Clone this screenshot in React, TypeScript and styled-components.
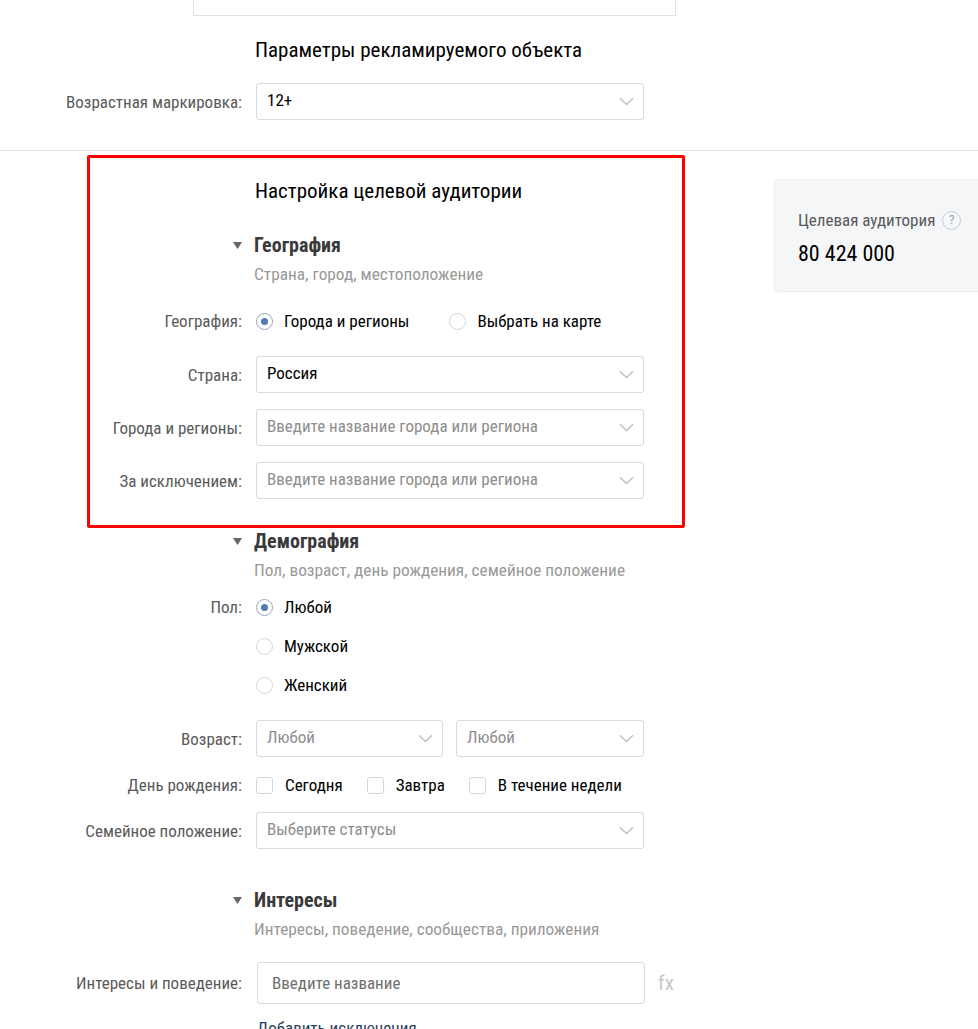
import React from "react";
import styled, { createGlobalStyle } from "styled-components";

const Global = createGlobalStyle`
  html, body { margin: 0; padding: 0; background: #fff; }
  body {
    font-family: "Liberation Sans Narrow", "Arial Narrow", "Roboto Condensed", Roboto, sans-serif;
    overflow-x: hidden;
    color: #000;
  }
  * { box-sizing: border-box; }
`;

const Page = styled.div`
  width: 978px;
  overflow: hidden;
`;

const TopBox = styled.div`
  margin-left: 193px;
  width: 483px;
  height: 16px;
  border: 1px solid #dfe2e7;
  border-top: none;
`;

const TopSection = styled.section`
  padding-bottom: 30px;
  border-bottom: 1px solid #e1e4e8;
`;

const Heading = styled.h2<{ $mt: number }>`
  margin: ${(p) => p.$mt}px 0 0 255px;
  font-size: 21px;
  line-height: 24px;
  font-weight: 400;
  color: #000;
`;

const Row = styled.div<{ $mt: number; $align?: string }>`
  display: grid;
  grid-template-columns: 242px 388px;
  column-gap: 14px;
  align-items: ${(p) => p.$align || "center"};
  margin-top: ${(p) => p.$mt}px;
`;

const Label = styled.div`
  text-align: right;
  color: #5a5a5a;
  font-size: 17px;
  line-height: 20px;
`;

const SelectBox = styled.div`
  height: 37px;
  border: 1px solid #d5dbe1;
  border-radius: 3px;
  display: flex;
  align-items: center;
  justify-content: space-between;
  padding: 0 9px 0 10px;
  background: #fff;
`;

const SelectText = styled.span<{ $placeholder?: boolean }>`
  font-size: 17px;
  color: ${(p) => (p.$placeholder ? "#8e8e8e" : "#000")};
  margin-top: -4px;
`;

const Chevron = () => (
  <svg width="15" height="9" viewBox="0 0 15 9" fill="none">
    <path d="M1 1.2 L7.5 7.5 L14 1.2" stroke="#b9c1ca" strokeWidth="1.4" />
  </svg>
);

const Select = ({ text, placeholder }: { text: string; placeholder?: boolean }) => (
  <SelectBox>
    <SelectText $placeholder={placeholder}>{text}</SelectText>
    <Chevron />
  </SelectBox>
);

const Main = styled.div`
  position: relative;
  display: flex;
`;

const FormCol = styled.div`
  width: 775px;
  flex: none;
`;

const Aside = styled.aside`
  flex: none;
  width: 230px;
  margin-top: 29px;
`;

const Panel = styled.div`
  background: #f5f6f8;
  border-radius: 4px;
  box-shadow: 0 0 0 1px #eceef1, 0 1px 2px rgba(0, 0, 0, 0.06);
  padding: 30px 23px 24px;
`;

const PanelTitle = styled.div`
  display: flex;
  align-items: center;
  gap: 7px;
  color: #5a5a5a;
  font-size: 17px;
  line-height: 20px;
`;

const Help = styled.span`
  width: 19px;
  height: 19px;
  border: 1px solid #c9ced6;
  border-radius: 50%;
  color: #9aa3ad;
  font-size: 13px;
  display: inline-flex;
  align-items: center;
  justify-content: center;
`;

const Audience = styled.div`
  margin-top: 11px;
  font-size: 22px;
  line-height: 26px;
  color: #000;
`;

const Highlight = styled.div`
  position: absolute;
  left: 87px;
  top: 4px;
  width: 598px;
  height: 373px;
  border: 3px solid #ff0000;
  border-radius: 2px;
  pointer-events: none;
`;

const HeadRow = styled.div<{ $mt: number }>`
  display: grid;
  grid-template-columns: 242px 388px;
  column-gap: 12px;
  align-items: center;
  margin-top: ${(p) => p.$mt}px;
`;

const Tri = styled.span`
  display: flex;
  justify-content: flex-end;
`;

const HeadTitle = styled.div`
  font-size: 20px;
  line-height: 22px;
  font-weight: 700;
  color: #3a3a3a;
`;

const Sub = styled.div<{ $mt: number }>`
  margin: ${(p) => p.$mt}px 0 0 254px;
  font-size: 17.3px;
  line-height: 20px;
  color: #999;
`;

const SectionHead = ({ title, sub, mt }: { title: string; sub: string; mt: number }) => (
  <>
    <HeadRow $mt={mt}>
      <Tri>
        <svg width="9" height="7" viewBox="0 0 9 7">
          <polygon points="0,0 9,0 4.5,7" fill="#666" />
        </svg>
      </Tri>
      <HeadTitle>{title}</HeadTitle>
    </HeadRow>
    <Sub $mt={8}>{sub}</Sub>
  </>
);

const Options = styled.div<{ $column?: boolean; $gap: number }>`
  display: flex;
  flex-direction: ${(p) => (p.$column ? "column" : "row")};
  gap: ${(p) => p.$gap}px;
`;

const Option = styled.label`
  display: flex;
  align-items: center;
  gap: 11px;
  height: 20px;
  font-size: 17px;
  color: #000;
`;

const RadioCircle = styled.span<{ $on?: boolean }>`
  width: 17px;
  height: 17px;
  border-radius: 50%;
  border: 1px solid ${(p) => (p.$on ? "#8fa7c4" : "#cfd7e0")};
  display: inline-flex;
  align-items: center;
  justify-content: center;
  flex: none;
  &::after {
    content: "";
    width: 7px;
    height: 7px;
    border-radius: 50%;
    background: ${(p) => (p.$on ? "#4f7ab5" : "transparent")};
  }
`;

const Box = styled.span`
  width: 17px;
  height: 17px;
  border-radius: 3px;
  border: 1px solid #cfd7e0;
  flex: none;
`;

const CheckOption = styled(Option)`
  gap: 12px;
`;

const Pair = styled.div`
  display: grid;
  grid-template-columns: 187px 188px;
  column-gap: 13px;
`;

const FieldAddon = styled.div`
  display: flex;
  align-items: center;
  gap: 13px;
  margin-left: 1px;
`;

const TextInput = styled.div`
  width: 388px;
  height: 42px;
  border: 1px solid #d5dbe1;
  border-radius: 3px;
  padding-left: 14px;
  display: flex;
  align-items: center;
  font-size: 17px;
  color: #6f6f6f;
  flex: none;
`;

const Fx = styled.span`
  color: #c4c8cc;
  font-size: 21px;
`;

const Link = styled.div`
  margin: 14px 0 0 257px;
  font-size: 17px;
  line-height: 20px;
  color: #2a3f5f;
`;

export default function App() {
  return (
    <Page>
      <Global />
      <TopSection>
        <TopBox />
        <Heading $mt={22}>Параметры рекламируемого объекта</Heading>
        <Row $mt={21}>
          <Label>Возрастная маркировка:</Label>
          <Select text="12+" />
        </Row>
      </TopSection>

      <Main>
        <Highlight />
        <FormCol>
          <Heading $mt={28}>Настройка целевой аудитории</Heading>

          <SectionHead title="География" sub="Страна, город, местоположение" mt={31} />
          <Row $mt={27}>
            <Label>География:</Label>
            <Options $gap={40}>
              <Option>
                <RadioCircle $on />
                Города и регионы
              </Option>
              <Option>
                <RadioCircle />
                Выбрать на карте
              </Option>
            </Options>
          </Row>
          <Row $mt={25}>
            <Label>Страна:</Label>
            <Select text="Россия" />
          </Row>
          <Row $mt={16}>
            <Label>Города и регионы:</Label>
            <Select text="Введите название города или региона" placeholder />
          </Row>
          <Row $mt={16}>
            <Label>За исключением:</Label>
            <Select text="Введите название города или региона" placeholder />
          </Row>

          <SectionHead title="Демография" sub="Пол, возраст, день рождения, семейное положение" mt={31} />
          <Row $mt={17} $align="start">
            <Label>Пол:</Label>
            <Options $column $gap={19}>
              <Option>
                <RadioCircle $on />
                Любой
              </Option>
              <Option>
                <RadioCircle />
                Мужской
              </Option>
              <Option>
                <RadioCircle />
                Женский
              </Option>
            </Options>
          </Row>
          <Row $mt={25}>
            <Label>Возраст:</Label>
            <Pair>
              <Select text="Любой" placeholder />
              <Select text="Любой" placeholder />
            </Pair>
          </Row>
          <Row $mt={18}>
            <Label>День рождения:</Label>
            <Options $gap={24}>
              <CheckOption>
                <Box />
                Сегодня
              </CheckOption>
              <CheckOption>
                <Box />
                Завтра
              </CheckOption>
              <CheckOption>
                <Box />
                В течение недели
              </CheckOption>
            </Options>
          </Row>
          <Row $mt={17}>
            <Label>Семейное положение:</Label>
            <Select text="Выберите статусы" placeholder />
          </Row>

          <SectionHead title="Интересы" sub="Интересы, поведение, сообщества, приложения" mt={40} />
          <Row $mt={23}>
            <Label>Интересы и поведение:</Label>
            <FieldAddon>
              <TextInput>Введите название</TextInput>
              <Fx>fx</Fx>
            </FieldAddon>
          </Row>
          <Link>Добавить исключения</Link>
        </FormCol>

        <Aside>
          <Panel>
            <PanelTitle>
              Целевая аудитория
              <Help>?</Help>
            </PanelTitle>
            <Audience>80 424 000</Audience>
          </Panel>
        </Aside>
      </Main>
    </Page>
  );
}
